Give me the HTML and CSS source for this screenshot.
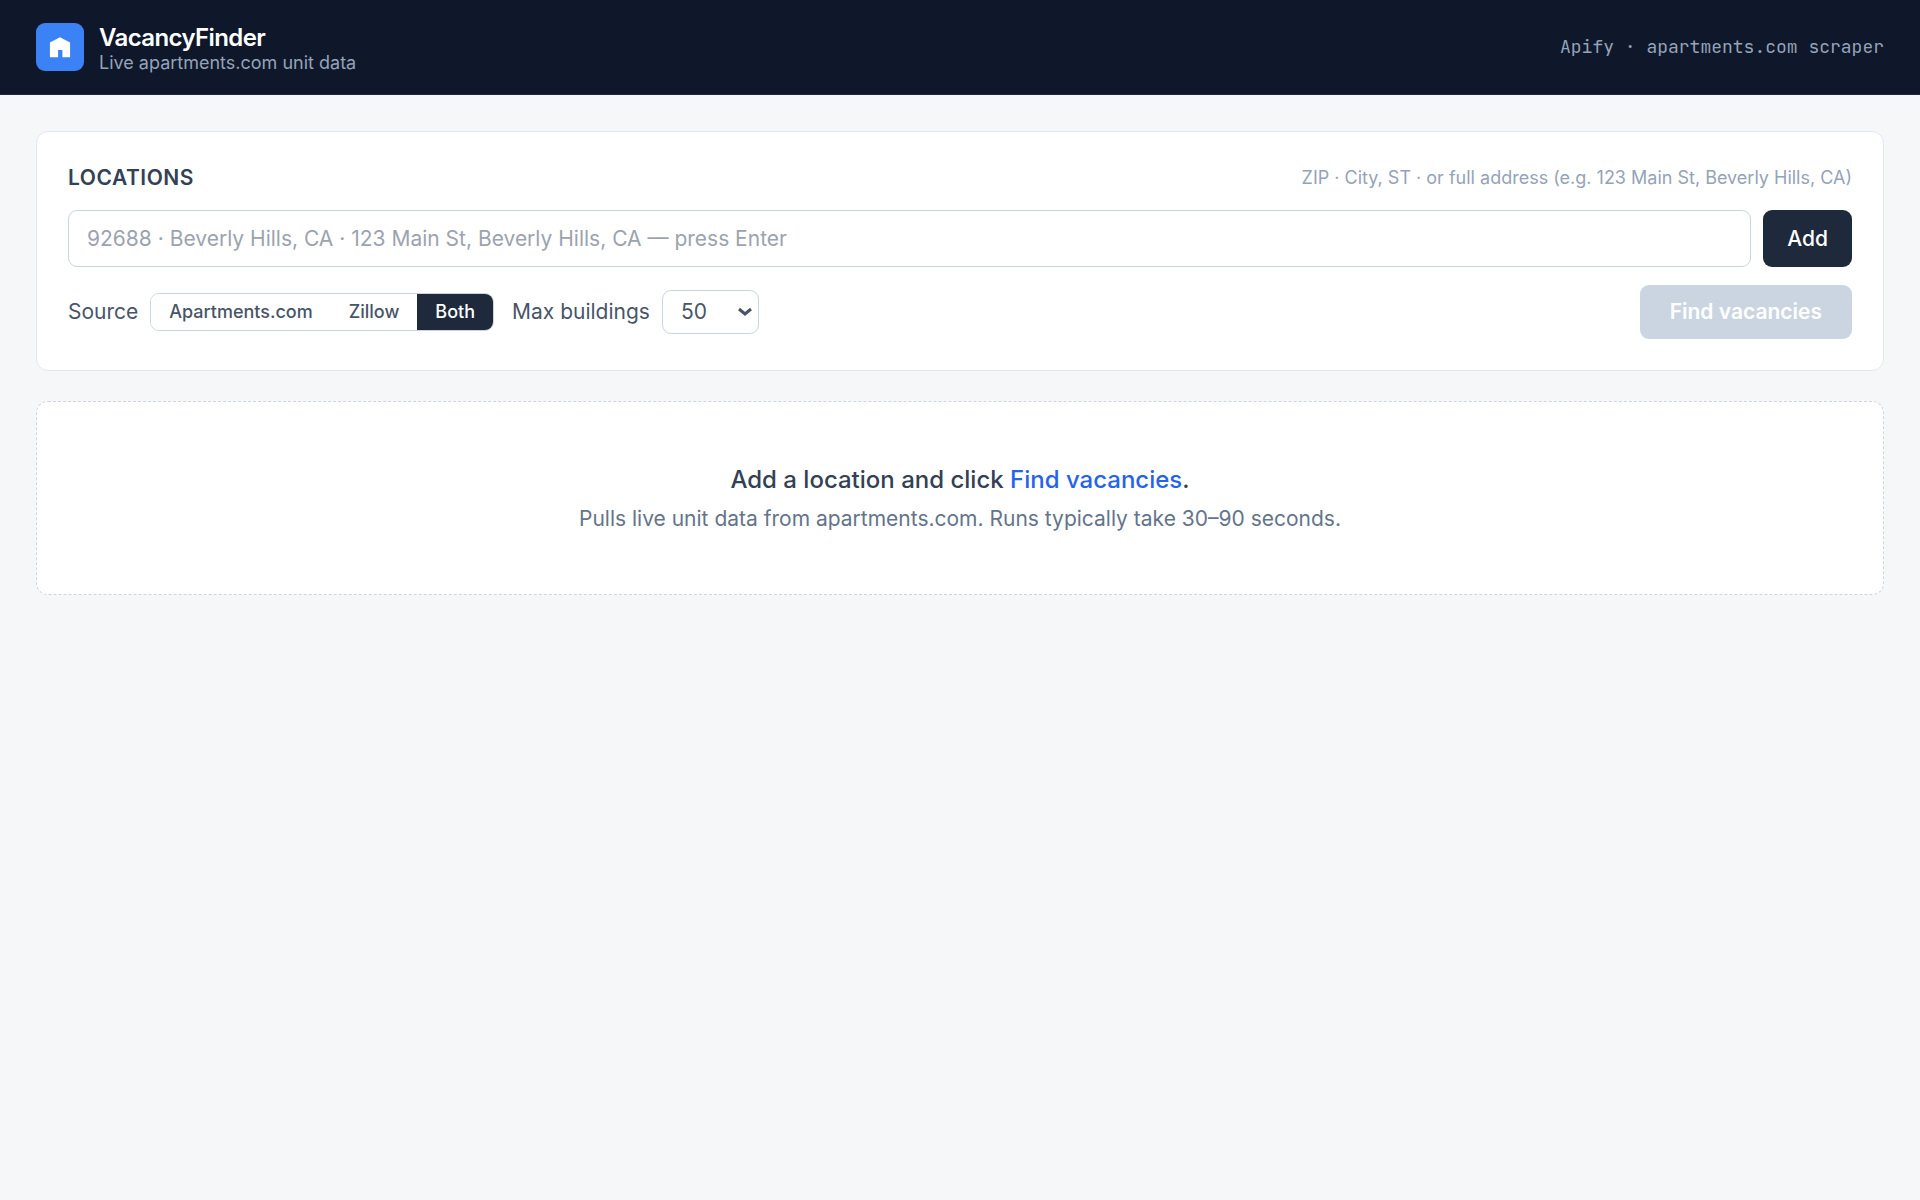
FILE: index.html
```
<!DOCTYPE html>
<html lang="en">
<head>
    <meta charset="UTF-8">
    <meta name="viewport" content="width=device-width, initial-scale=1.0">
    <title>VacancyFinder</title>
    <link rel="stylesheet" href="styles.css">
</head>
<body>
    <header class="topbar">
        <div class="brand">
            <div class="logo">
                <svg viewBox="0 0 20 20" width="24" height="24" fill="currentColor" aria-hidden="true">
                    <path d="M10 1.8 L18.4 6.2 V18.6 H12 V12.6 H8.4 V18.6 H1.6 V6.2 Z"/>
                </svg>
            </div>
            <div>
                <h1>VacancyFinder</h1>
                <p class="tagline">Live apartments.com unit data</p>
            </div>
        </div>
        <div class="powered">Apify · apartments.com scraper</div>
    </header>

    <main>
        <form class="card" id="searchForm">
            <div class="card-head">
                <h2><label for="locationInput">LOCATIONS</label></h2>
                <span class="hint">ZIP · City, ST · or full address (e.g. 123 Main St, Beverly Hills, CA)</span>
            </div>
            <div class="location-row">
                <input type="text" id="locationInput" placeholder="92688 · Beverly Hills, CA · 123 Main St, Beverly Hills, CA — press Enter">
                <button type="button" class="add-btn">Add</button>
            </div>
            <div class="options">
                <div class="option">
                    <span id="sourceLabel">Source</span>
                    <div class="segmented" role="group" aria-labelledby="sourceLabel">
                        <button type="button">Apartments.com</button>
                        <button type="button">Zillow</button>
                        <button type="button" class="active">Both</button>
                    </div>
                </div>
                <div class="option">
                    <label for="maxBuildings">Max buildings</label>
                    <select id="maxBuildings">
                        <option>10</option>
                        <option>25</option>
                        <option selected>50</option>
                        <option>100</option>
                    </select>
                </div>
                <button type="submit" class="find-btn" disabled>Find vacancies</button>
            </div>
        </form>

        <section class="empty">
            <p class="empty-title">Add a location and click <span class="accent">Find vacancies</span>.</p>
            <p class="empty-text">Pulls live unit data from apartments.com. Runs typically take 30–90 seconds.</p>
        </section>
    </main>
</body>
</html>
```
FILE: styles.css
```
* {
    box-sizing: border-box;
}
body {
    margin: 0;
    min-height: 100vh;
    background-color: #f5f7f9;
    color: #0f172a;
    font-family: Inter, "Liberation Sans", sans-serif;
    font-size: 21px;
    line-height: 30px;
}
h1, h2, p {
    margin: 0;
}
button, input, select {
    font: inherit;
}
button {
    border: none;
    cursor: pointer;
}

/* header */
.topbar {
    display: flex;
    align-items: center;
    justify-content: space-between;
    padding: 22px 36px;
    border-bottom: 1px solid #1e293b;
    background-color: #0f172a;
}
.brand {
    display: flex;
    align-items: center;
    gap: 15px;
}
.logo {
    display: flex;
    align-items: center;
    justify-content: center;
    width: 48px;
    height: 48px;
    border-radius: 9px;
    background-color: #3b82f6;
    color: #fff;
}
h1 {
    color: #fff;
    font-size: 24px;
    font-weight: 600;
    line-height: 32px;
    letter-spacing: -0.025em;
}
.tagline {
    color: #94a3b8;
    font-size: 18px;
    line-height: 18px;
}
.powered {
    color: #94a3b8;
    font-family: "JetBrains Mono", "DejaVu Sans Mono", monospace;
    font-size: 18px;
    line-height: 24px;
}

main {
    display: flex;
    flex-direction: column;
    gap: 30px;
    padding: 36px;
}

/* search card */
.card {
    padding: 31px;
    border: 1px solid #e2e8f0;
    border-radius: 12px;
    background-color: #fff;
}
.card-head {
    display: flex;
    align-items: center;
    justify-content: space-between;
    margin-bottom: 17px;
}
h2 {
    color: #334155;
    font-size: 21px;
    font-weight: 600;
    letter-spacing: 0.025em;
}
.hint {
    color: #94a3b8;
    font-size: 18px;
}
.location-row {
    display: flex;
    gap: 12px;
    margin-bottom: 18px;
}
.location-row input {
    flex: 1;
    min-width: 0;
    height: 57px;
    padding: 12px 18px;
    border: 1px solid #cbd5e1;
    border-radius: 9px;
    background-color: #fff;
    color: #0f172a;
}
.location-row input::placeholder {
    color: #9ca3af;
}
.add-btn {
    padding: 12px 24px;
    border-radius: 9px;
    background-color: #1e293b;
    color: #fff;
    font-weight: 500;
}
.options {
    display: flex;
    flex-wrap: wrap;
    align-items: center;
    gap: 18px;
    color: #475569;
}
.option {
    display: flex;
    align-items: center;
    gap: 12px;
}
.segmented {
    display: flex;
    overflow: hidden;
    border: 1px solid #cbd5e1;
    border-radius: 9px;
}
.segmented button {
    padding: 6px 18px;
    background-color: #fff;
    color: #475569;
    font-size: 18px;
    font-weight: 500;
    line-height: 24px;
}
.segmented .active {
    background-color: #1e293b;
    color: #fff;
}
select {
    width: 97px;
    padding: 6px 18px;
    border: 1px solid #cbd5e1;
    border-radius: 9px;
    background: #fff url("data:image/svg+xml,%3Csvg xmlns='http://www.w3.org/2000/svg' width='14' height='10' fill='none' stroke='%23475569' stroke-width='3'%3E%3Cpath d='M1 2l6 5 6-5'/%3E%3C/svg%3E") no-repeat right 6px center;
    color: #475569;
    appearance: none;
}
.find-btn {
    margin-left: auto;
    padding: 12px 30px;
    border-radius: 9px;
    background-color: #2563eb;
    color: #fff;
    font-weight: 600;
}
.find-btn:disabled {
    background-color: #cbd5e1;
    cursor: not-allowed;
}

/* empty state */
.empty {
    padding: 60px;
    border: 1px dashed #cbd5e1;
    border-radius: 12px;
    background-color: #fff;
    text-align: center;
}
.empty-title {
    margin-bottom: 6px;
    color: #334155;
    font-size: 24px;
    font-weight: 500;
    line-height: 36px;
}
.accent {
    color: #2563eb;
}
.empty-text {
    color: #64748b;
}
```
